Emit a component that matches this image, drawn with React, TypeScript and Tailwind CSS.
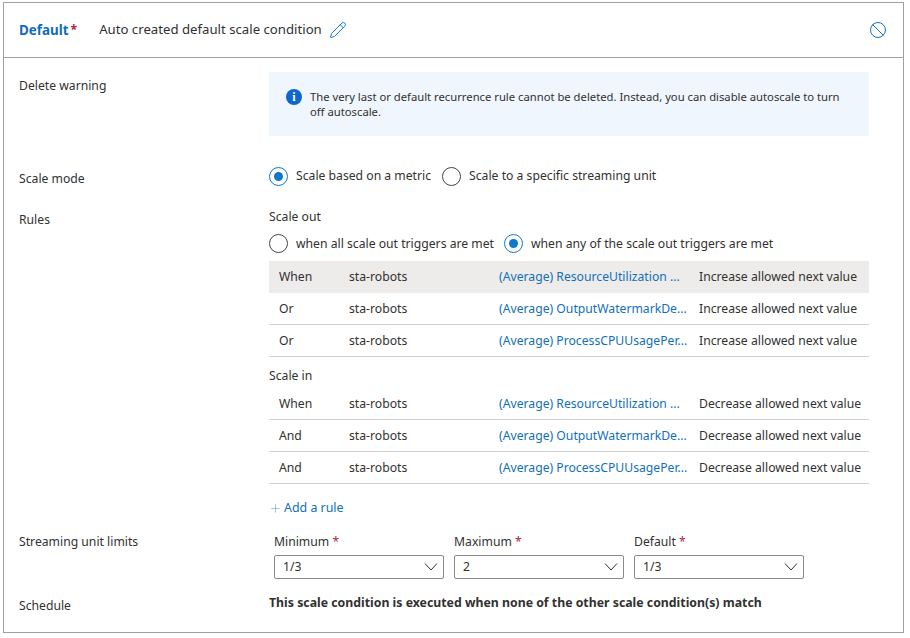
import { Pencil, Plus, Ban } from "lucide-react";

const scaleOut = [
  ["When", "(Average) ResourceUtilization ..."],
  ["Or", "(Average) OutputWatermarkDe..."],
  ["Or", "(Average) ProcessCPUUsagePer..."],
];

const scaleIn = [
  ["When", "(Average) ResourceUtilization ..."],
  ["And", "(Average) OutputWatermarkDe..."],
  ["And", "(Average) ProcessCPUUsagePer..."],
];

function Radio({ checked, label }: { checked?: boolean; label: string }) {
  return (
    <div className="flex items-center gap-[8px]">
      <span
        className={`flex h-[19px] w-[19px] items-center justify-center rounded-full border ${
          checked ? "border-[#0f78c8]" : "border-[#444]"
        }`}
      >
        {checked && <span className="h-[9px] w-[9px] rounded-full bg-[#0f78c8]" />}
      </span>
      <span>{label}</span>
    </div>
  );
}

function RuleRow({
  op,
  metric,
  action,
  selected,
}: {
  op: string;
  metric: string;
  action: string;
  selected?: boolean;
}) {
  return (
    <div
      className={`flex h-[32px] items-center pl-[10px] ${
        selected ? "bg-[#eeecea]" : "border-b border-[#d0d0d0]"
      }`}
    >
      <span className="w-[70px]">{op}</span>
      <span className="w-[150px]">sta-robots</span>
      <span className="w-[200px] whitespace-nowrap text-[#1270b8]">{metric}</span>
      <span className="whitespace-nowrap">{action}</span>
    </div>
  );
}

function LimitSelect({ label, value }: { label: string; value: string }) {
  return (
    <div className="w-[170px]">
      <div className="h-[23px] leading-[20px]">
        {label} <span className="text-[#b0273a]">*</span>
      </div>
      <div className="flex h-[24px] items-center justify-between rounded-[2px] border border-[#8a8a8a] pl-[8px] pr-[4px]">
        <span>{value}</span>
        <svg width="16" height="10" viewBox="0 0 16 10" fill="none" stroke="#323130" strokeWidth="1">
          <path d="M2 1.5 L8 8 L14 1.5" />
        </svg>
      </div>
    </div>
  );
}

export default function App() {
  return (
    <div className="h-[638px] w-[910px] bg-white pl-[3px] pt-[2px] text-[12.2px] text-[#323130] [font-family:'Noto_Sans',sans-serif]">
      <div className="flex h-[631px] w-[901px] flex-col border border-[#a0a0a0]">
        <header className="flex h-[55px] shrink-0 items-center border-b border-[#a0a0a0] pl-[15px] pr-[16px]">
          <span className="text-[13.4px] font-bold text-[#0f6cbd]">Default</span>
          <span className="ml-[2px] font-bold text-[#b0273a]">*</span>
          <span className="ml-[22px] text-[13.2px]">Auto created default scale condition</span>
          <Pencil size={18} strokeWidth={1.3} className="ml-[7px] text-[#1478c8]" />
          <Ban size={18} strokeWidth={1.3} className="ml-auto text-[#1270b8]" />
        </header>

        <div className="flex flex-col pt-[14px]">
          <div className="flex">
            <div className="w-[265px] pl-[15px] pt-[5px]">Delete warning</div>
            <div className="flex h-[64px] w-[600px] bg-[#f0f6fd] pl-[17px] pr-[24px] pt-[17px]">
              <span className="mr-[8px] flex h-[16px] w-[16px] shrink-0 items-center justify-center rounded-full bg-[#0f66d0] text-[12px] font-bold text-white [font-family:'Liberation_Serif',serif]">
                i
              </span>
              <p className="text-[11.25px] leading-[15px]">
                The very last or default recurrence rule cannot be deleted. Instead, you can disable autoscale to turn
                <br />
                off autoscale.
              </p>
            </div>
          </div>

          <div className="mt-[28px] flex">
            <div className="w-[265px] pl-[15px] pt-[6px]">Scale mode</div>
            <div className="flex gap-[11px]">
              <Radio checked label="Scale based on a metric" />
              <Radio label="Scale to a specific streaming unit" />
            </div>
          </div>

          <div className="mt-[20px] flex">
            <div className="w-[265px] pl-[15px] pt-[3px]">Rules</div>
            <div className="w-[600px]">
              <div className="h-[18px] leading-[18px]">Scale out</div>
              <div className="mt-[8px] flex h-[19px] gap-[10px]">
                <Radio label="when all scale out triggers are met" />
                <Radio checked label="when any of the scale out triggers are met" />
              </div>
              <div className="mt-[8px]">
                {scaleOut.map(([op, metric], i) => (
                  <RuleRow key={i} op={op} metric={metric} action="Increase allowed next value" selected={i === 0} />
                ))}
              </div>
              <div className="mt-[10px] h-[18px] leading-[18px]">Scale in</div>
              <div className="pt-[3px]">
                {scaleIn.map(([op, metric], i) => (
                  <RuleRow key={i} op={op} metric={metric} action="Decrease allowed next value" />
                ))}
              </div>
              <div className="mt-[15px] flex h-[18px] items-center gap-[2px] text-[#1270b8]">
                <Plus size={13} strokeWidth={1.2} className="text-[#6aa9da]" />
                <span className="text-[12.4px]">Add a rule</span>
              </div>
            </div>
          </div>

          <div className="mt-[15px] flex">
            <div className="w-[265px] pl-[15px] pt-[1px]">Streaming unit limits</div>
            <div className="flex gap-[10px] pl-[5px]">
              <LimitSelect label="Minimum" value="1/3" />
              <LimitSelect label="Maximum" value="2" />
              <LimitSelect label="Default" value="1/3" />
            </div>
          </div>

          <div className="mt-[15px] flex">
            <div className="w-[265px] pl-[15px] pt-[3px]">Schedule</div>
            <div className="text-[12.3px] font-bold">This scale condition is executed when none of the other scale condition(s) match</div>
          </div>
        </div>
      </div>
    </div>
  );
}
